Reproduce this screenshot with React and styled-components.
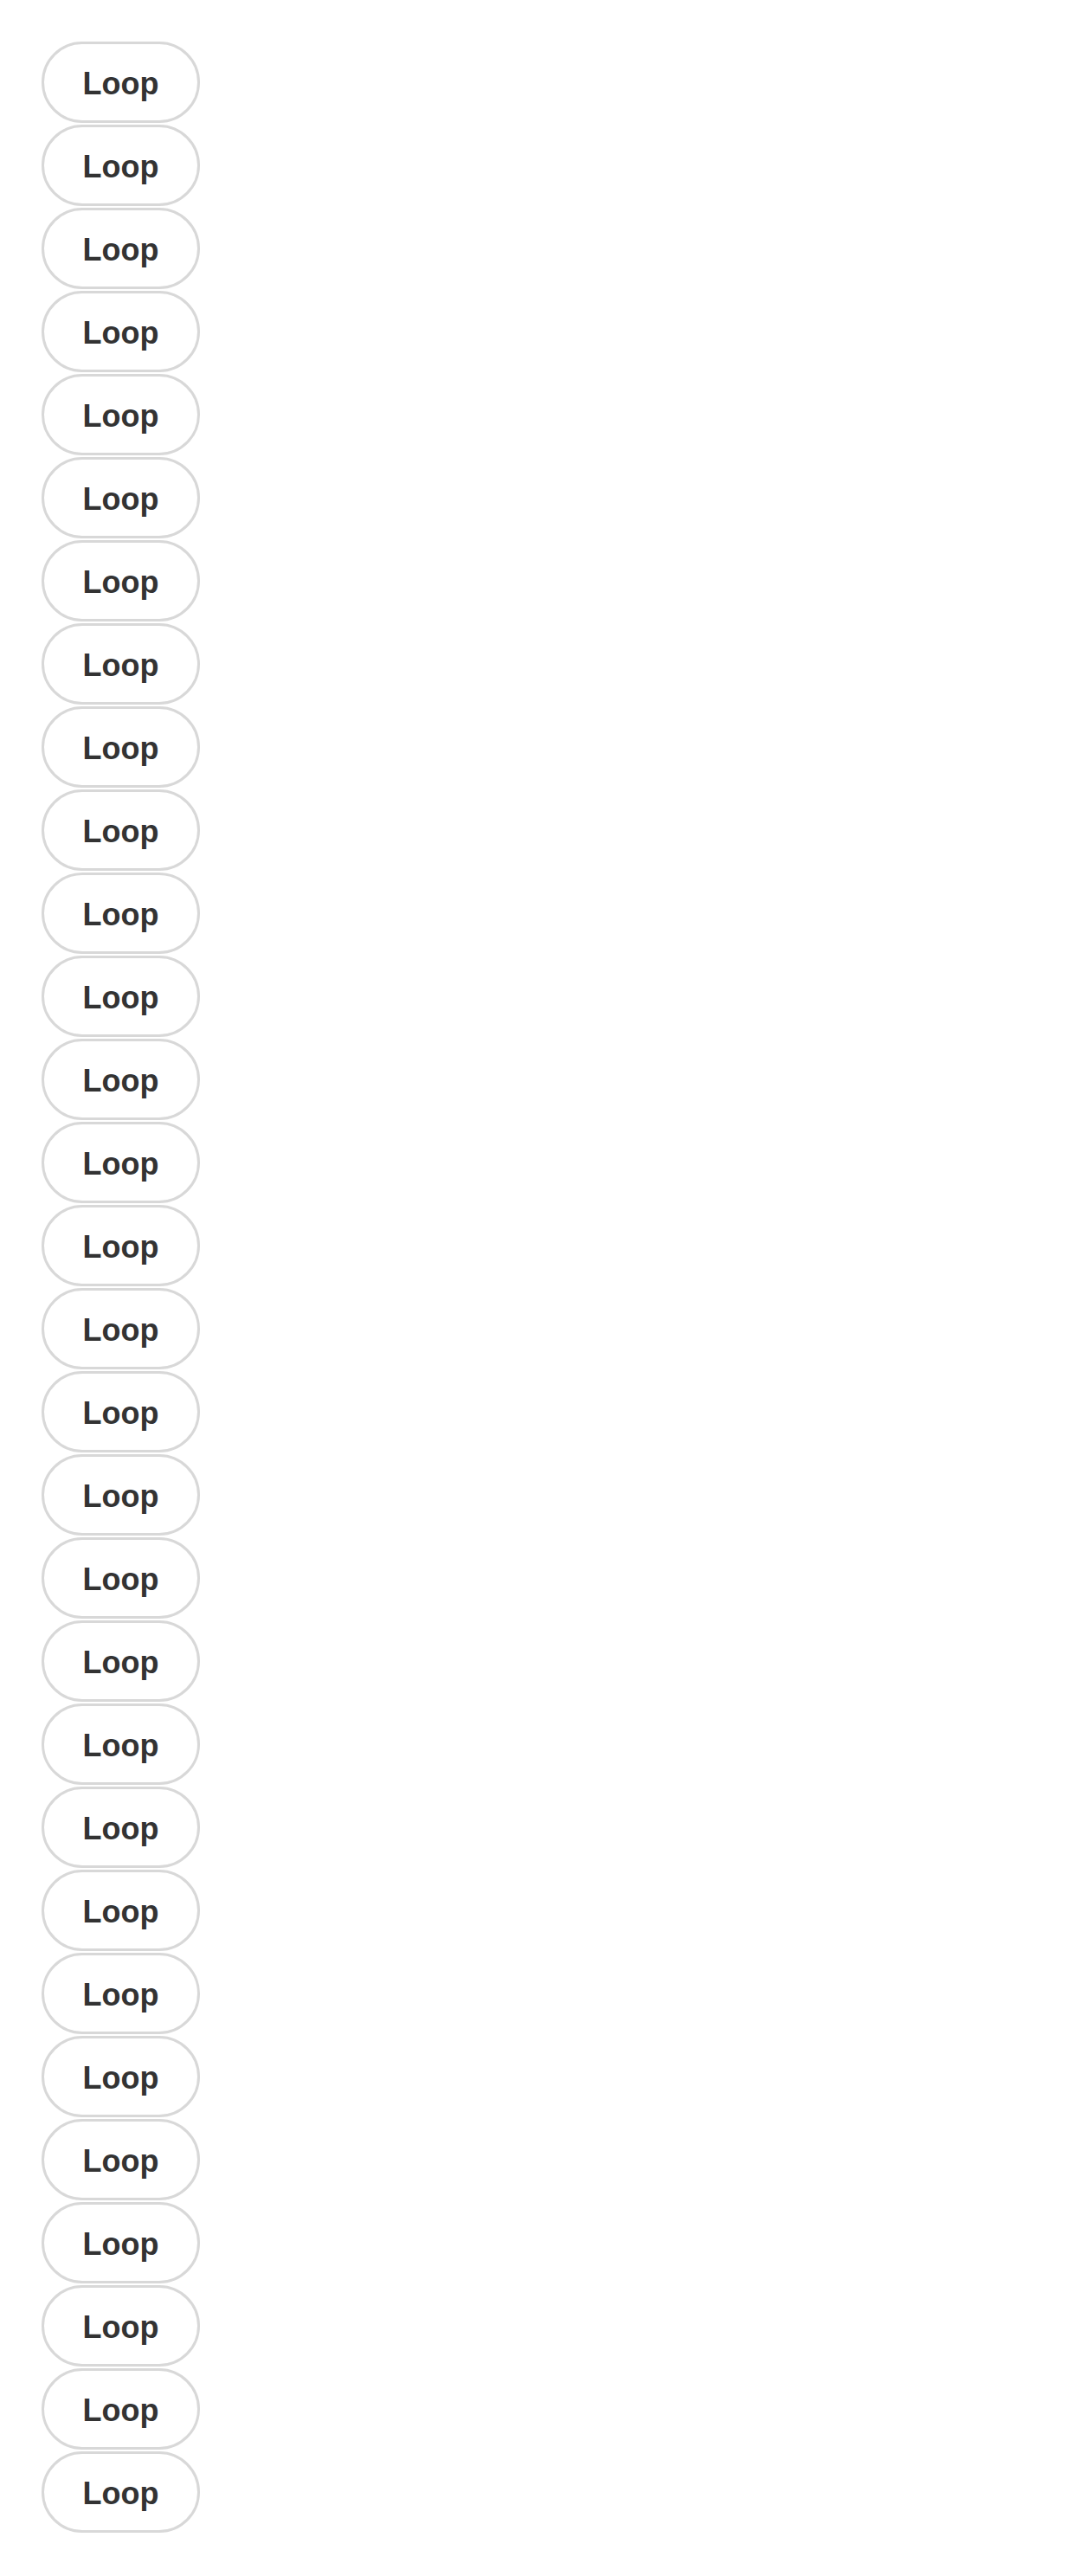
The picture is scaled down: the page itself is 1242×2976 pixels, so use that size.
import React from 'react';
import styled, { createGlobalStyle } from 'styled-components';

const GlobalStyle = createGlobalStyle`
  body {
    margin: 0;
    background: #ffffff;
    font-family: "Liberation Sans", Arial, sans-serif;
  }
`;

const List = styled.div`
  display: flex;
  flex-direction: column;
  align-items: flex-start;
  gap: 2px;
  padding: 48px 0 0 48px;
`;

const LoopButton = styled.button`
  width: 183px;
  height: 94px;
  box-sizing: border-box;
  border: 3px solid #d8d8d8;
  border-radius: 47px;
  background: #ffffff;
  color: #333333;
  font-family: "Liberation Sans", Arial, sans-serif;
  font-weight: 700;
  font-size: 36px;
  display: flex;
  align-items: center;
  justify-content: center;
  padding: 3px 0 0;
  cursor: pointer;
`;

const items = Array.from({ length: 30 }, (_, i) => i);

const App = () => {
  return (
    <>
      <GlobalStyle />
      <List>
        {items.map((i) => (
          <LoopButton type="button" key={i}>
            Loop
          </LoopButton>
        ))}
      </List>
    </>
  );
};

export default App;
